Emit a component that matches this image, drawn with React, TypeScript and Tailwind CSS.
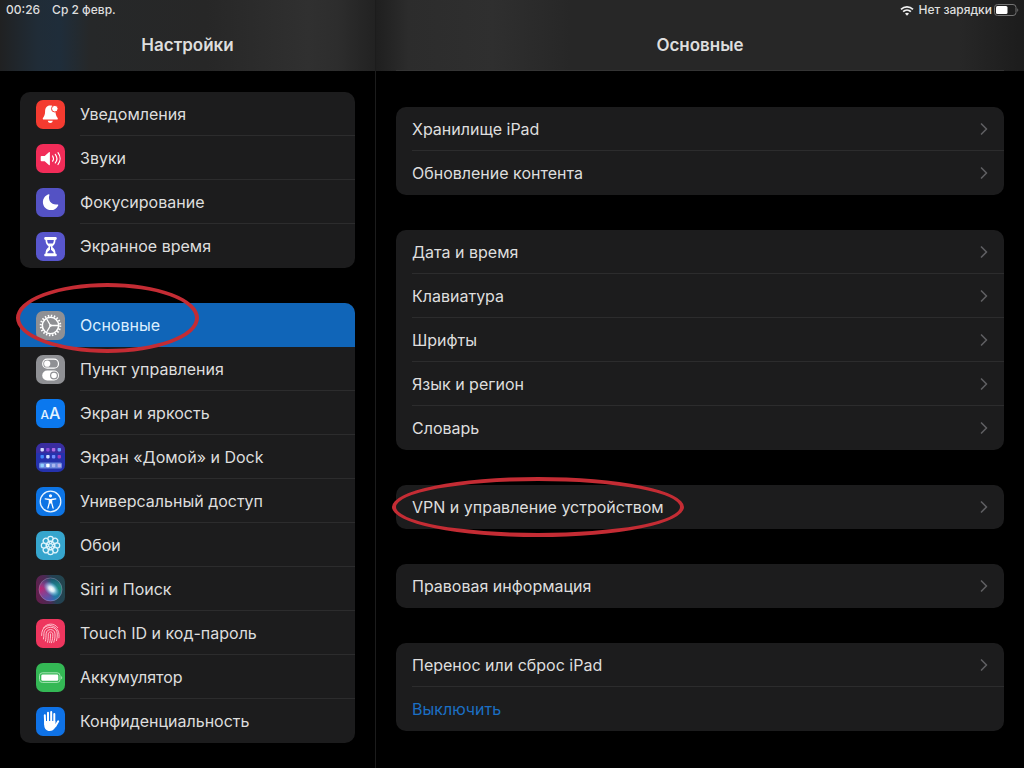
import React from "react";
import { ChevronRight } from "lucide-react";

type Item = {
  label: string;
  icon?: React.ReactNode;
  selected?: boolean;
  accent?: boolean;
  mark?: React.ReactNode;
};

const Tile = ({
  className,
  children,
}: {
  className: string;
  children: React.ReactNode;
}) => (
  <span
    className={`flex h-[29px] w-[29px] shrink-0 items-center justify-center overflow-hidden rounded-[7px] ${className}`}
  >
    {children}
  </span>
);

const Glyph = ({ children }: { children: React.ReactNode }) => (
  <svg viewBox="0 0 29 29" className="h-full w-full" fill="none" aria-hidden="true">
    {children}
  </svg>
);

const BellIcon = () => (
  <Tile className="bg-[#f43b30]">
    <Glyph>
      <path
        d="M14.2 5.500c-3.600 0-5 2.700-5.100 5.700-.1 3.300-.7 4.800-2 6.500-.7.9-.4 1.900.7 1.900h13c1.100 0 1.400-1 .7-1.900-1.300-1.700-1.900-3.200-2-6.500-.1-3-1.700-5.700-5.300-5.700z"
        fill="#fff"
      />
      <path d="M11.800 20.800h5c-.3 1.500-1.200 2.200-2.500 2.200s-2.200-.7-2.500-2.200z" fill="#fff" />
      <circle cx="18.800" cy="8.700" r="3.300" fill="#fff" stroke="#f43b30" strokeWidth="1" />
    </Glyph>
  </Tile>
);

const SoundIcon = () => (
  <Tile className="bg-[#f12c58]">
    <Glyph>
      <path d="M5.500 12h3.200l4.200-3.800c.5-.4 1-.2 1 .4v12c0 .6-.5.8-1 .4l-4.200-3.800H5.500c-.5 0-.8-.3-.8-.8v-3.600c0-.5.3-.8.8-.8z" fill="#fff" />
      <path d="M16.600 12c1 1.500 1 3.700 0 5.200M19.300 10.300c1.900 2.500 1.900 6.100 0 8.600M22 8.700c2.700 3.500 2.700 8.300 0 11.800" stroke="#fff" strokeWidth="1.200" strokeLinecap="round" />
    </Glyph>
  </Tile>
);

const MoonIcon = () => (
  <Tile className="bg-[#5452c4]">
    <Glyph>
      <path d="M12.700 6.300c.5-.2.900.2.700.7-1.700 5.500 2.100 10.300 8 9.400.7-.1 1.100.4.800 1-1.400 3-4.100 4.700-7.300 4.700-4.500 0-8-3.400-8-7.800 0-3.700 2.300-6.800 5.800-8z" fill="#fff" />
    </Glyph>
  </Tile>
);

const HourglassIcon = () => (
  <Tile className="bg-[#5856cd]">
    <Glyph>
      <path
        d="M9.500 5h10c.8 0 1.300.6 1.300 1.400 0 .9-.5 1.400-1.300 1.500 0 3.200-1.200 4.700-2.700 6-.5.4-.5 1.100 0 1.500 1.500 1.300 2.700 2.800 2.700 6 .8.1 1.300.6 1.300 1.500 0 .8-.5 1.400-1.300 1.400h-10c-.8 0-1.300-.6-1.300-1.400 0-.9.5-1.400 1.300-1.500 0-3.200 1.200-4.700 2.700-6 .5-.4.5-1.100 0-1.500-1.500-1.300-2.700-2.800-2.700-6-.8-.1-1.300-.6-1.300-1.500C8.200 5.600 8.700 5 9.500 5z"
        fill="#fff"
      />
      <path d="M11.200 8h6.600c0 1.600-.4 2.600-1 3.400h-4.600c-.6-.8-1-1.800-1-3.400zM14 14.600h1v3.200l2.400 2.200c.2.400.3.800.3 1.300h-6.400c0-.5.1-.9.300-1.300l2.400-2.200z" fill="#5856cd" />
    </Glyph>
  </Tile>
);

const GearIcon = () => (
  <Tile className="bg-[#8f9094]">
    <Glyph>
      <circle cx="14.500" cy="14.500" r="9.800" stroke="#fff" strokeWidth="2" strokeDasharray="1.500 1.579" />
      <circle cx="14.500" cy="14.500" r="8.200" stroke="#fff" strokeWidth="1.600" />
      <circle cx="14.500" cy="14.500" r="1.300" fill="#fff" />
      <path d="M14.500 14.500H22M14.500 14.500l-3.800-6.500M14.500 14.500l-3.800 6.500" stroke="#fff" strokeWidth="1.300" />
    </Glyph>
  </Tile>
);

const TogglesIcon = () => (
  <Tile className="bg-[#8f9094]">
    <Glyph>
      <rect x="6.700" y="4.200" width="15.800" height="9" rx="4.500" stroke="#fff" strokeWidth="1.200" />
      <circle cx="11.200" cy="8.700" r="3.100" fill="#fff" />
      <rect x="6.200" y="15.500" width="16.800" height="10" rx="5" fill="#fff" />
      <circle cx="18" cy="20.500" r="3.400" fill="#fff" stroke="#8f9094" strokeWidth="1.200" />
    </Glyph>
  </Tile>
);

const TextSizeIcon = () => (
  <Tile className="bg-[#0b78ee]">
    <span className="flex items-baseline font-medium leading-none text-[#e4f2ff]">
      <span className="text-[12px]">A</span>
      <span className="text-[16px]">A</span>
    </span>
  </Tile>
);

const homeApps = [
  ["#d5dcff", "#8a4bd8", "#b06be0", "#6da4ff"],
  ["#3f8cff", "#cfe0ff", "#6f8cff", "#a13ec0"],
];

const HomeScreenIcon = () => (
  <Tile className="bg-[#2532ad]">
    <Glyph>
      <rect x="0" y="0" width="29" height="10" fill="#3a2da0" />
      {homeApps.map((row, y) =>
        row.map((color, x) => (
          <rect key={`${x}-${y}`} x={4.5 + x * 5.7} y={5 + y * 7} width="3.400" height="3.400" rx="0.800" fill={color} />
        ))
      )}
      <rect x="3" y="19.500" width="23" height="6" rx="1.500" fill="#6b87dc" />
      {["#8fd0ff", "#ffffff", "#a9b6ee", "#b7a9e6"].map((color, x) => (
        <rect key={x} x={4.5 + x * 5.7} y="20.800" width="3.400" height="3.400" rx="0.800" fill={color} />
      ))}
    </Glyph>
  </Tile>
);

const AccessibilityIcon = () => (
  <Tile className="bg-[#0d74e4]">
    <Glyph>
      <circle cx="14.500" cy="14.500" r="10.300" stroke="#e4f2ff" strokeWidth="1.300" />
      <circle cx="14.500" cy="8.800" r="1.600" fill="#fff" />
      <path
        d="M9.200 11.800l4.200.7v3.200l-1.500 5.500M19.800 11.800l-4.200.7v3.200l1.500 5.500"
        stroke="#fff"
        strokeWidth="1.300"
        strokeLinecap="round"
        strokeLinejoin="round"
      />
      <path d="M13 12h3v4.400h-3z" fill="#fff" />
    </Glyph>
  </Tile>
);

const WallpaperIcon = () => (
  <Tile className="bg-[#36a5cd]">
    <Glyph>
      {[0, 45, 90, 135, 180, 225, 270, 315].map((angle) => (
        <g key={angle} transform={`rotate(${angle} 14.500 14.500)`}>
          <circle cx="14.500" cy="8" r="2.700" fill="#36a5cd" fillOpacity="0.500" stroke="#dff4fc" strokeWidth="1.200" />
          <circle cx="14.500" cy="11.300" r="1.500" stroke="#dff4fc" strokeWidth="0.900" />
        </g>
      ))}
      <circle cx="14.500" cy="14.500" r="1.900" fill="#36a5cd" stroke="#dff4fc" strokeWidth="1.100" />
    </Glyph>
  </Tile>
);

const SiriIcon = () => (
  <Tile className="bg-[#27203a]">
    <Glyph>
      <defs>
        <linearGradient id="siri-orb" x1="0" y1="0.600" x2="1" y2="0.400">
          <stop offset="0" stopColor="#d01c6c" />
          <stop offset="0.400" stopColor="#8b3c86" />
          <stop offset="0.620" stopColor="#1d7f86" />
          <stop offset="1" stopColor="#1a8a72" />
        </linearGradient>
        <linearGradient id="siri-shade" x1="0" y1="0" x2="0" y2="1">
          <stop offset="0" stopColor="#10324a" stopOpacity="0.700" />
          <stop offset="0.450" stopColor="#3478c8" stopOpacity="0" />
          <stop offset="1" stopColor="#2868cc" stopOpacity="0.700" />
        </linearGradient>
        <radialGradient id="siri-glow">
          <stop offset="0" stopColor="#fff" />
          <stop offset="0.350" stopColor="#e4f5ff" stopOpacity="0.900" />
          <stop offset="1" stopColor="#6cc8ff" stopOpacity="0" />
        </radialGradient>
      </defs>
      <rect width="29" height="29" fill="url(#siri-orb)" fillOpacity="0.350" />
      <circle cx="14.500" cy="14.500" r="11.500" fill="url(#siri-orb)" />
      <circle cx="14.500" cy="14.500" r="11.500" fill="url(#siri-shade)" stroke="#a58fb5" strokeOpacity="0.600" strokeWidth="0.800" />
      <ellipse cx="15.500" cy="14" rx="9" ry="6" transform="rotate(40 15.500 14)" fill="url(#siri-glow)" />
    </Glyph>
  </Tile>
);

const TouchIdIcon = () => (
  <Tile className="bg-[#ee365e]">
    <Glyph>
      <g stroke="#ffd0d8" strokeWidth="0.900" strokeLinecap="round">
        <path d="M7.500 8.800c3.800-5 10.700-5 14.200-.2" />
        <path d="M5.600 16.500c-.3-9.500 7.400-11.300 11.700-9.200 5 2.500 6.200 6.400 5.600 11.500" />
        <path d="M7.500 20c.5-2 .3-3.500.4-5.500.3-8.200 13.200-8.500 13.400.5.1 2.400-.2 4.200-.8 6.600" />
        <path d="M9.400 22c.7-2.500.6-4.800.7-7.200.3-5.600 8.600-5.700 8.900.1.200 3-.3 5.500-1.200 8.300" />
        <path d="M11.500 23.300c.8-2.900.8-5.300.8-8.200.1-2.900 4.300-2.900 4.500 0 .2 3-.4 6-1.400 8.700" />
        <path d="M14.500 15c.1 3-.1 5.800-.8 8.500" />
      </g>
    </Glyph>
  </Tile>
);

const BatteryIcon = () => (
  <Tile className="bg-[#34b855]">
    <Glyph>
      <rect x="3.500" y="9.800" width="20.500" height="9.600" rx="2.800" stroke="#a5e3b3" strokeWidth="1" />
      <rect x="5.300" y="11.500" width="17" height="6.200" rx="1.300" fill="#fff" />
      <path d="M25.300 12.900c1.200.4 1.200 3 0 3.400z" fill="#c9f1d2" />
    </Glyph>
  </Tile>
);

const HandIcon = () => (
  <Tile className="bg-[#0f72e6]">
    <Glyph>
      <g stroke="#fff" strokeWidth="2" strokeLinecap="round">
        <path d="M8.800 8.300l.4 9M12 5.700v10M15.200 5.100v10M18.300 7v10" />
        <path d="M22.200 14.300l-2.900 5" />
      </g>
      <path d="M8.200 14h11.100v3l1.300-.3c-.6 2.300-1.300 3.900-2.500 5.300-1 1.300-2.300 2-4.300 2-3.700 0-5.400-2.400-5.600-6z" fill="#fff" />
    </Glyph>
  </Tile>
);

const Mark = ({ className }: { className: string }) => (
  <span
    className={`pointer-events-none absolute z-10 rounded-[50%] border-4 border-[#c42c34] ${className}`}
  />
);

const sidebarGroups: Item[][] = [
  [
    { label: "Уведомления", icon: <BellIcon /> },
    { label: "Звуки", icon: <SoundIcon /> },
    { label: "Фокусирование", icon: <MoonIcon /> },
    { label: "Экранное время", icon: <HourglassIcon /> },
  ],
  [
    {
      label: "Основные",
      icon: <GearIcon />,
      selected: true,
      mark: <Mark className="-left-1 -top-5 h-[70px] w-[183px]" />,
    },
    { label: "Пункт управления", icon: <TogglesIcon /> },
    { label: "Экран и яркость", icon: <TextSizeIcon /> },
    { label: "Экран «Домой» и Dock", icon: <HomeScreenIcon /> },
    { label: "Универсальный доступ", icon: <AccessibilityIcon /> },
    { label: "Обои", icon: <WallpaperIcon /> },
    { label: "Siri и Поиск", icon: <SiriIcon /> },
    { label: "Touch ID и код-пароль", icon: <TouchIdIcon /> },
    { label: "Аккумулятор", icon: <BatteryIcon /> },
    { label: "Конфиденциальность", icon: <HandIcon /> },
  ],
];

const generalGroups: Item[][] = [
  [{ label: "Хранилище iPad" }, { label: "Обновление контента" }],
  [
    { label: "Дата и время" },
    { label: "Клавиатура" },
    { label: "Шрифты" },
    { label: "Язык и регион" },
    { label: "Словарь" },
  ],
  [
    {
      label: "VPN и управление устройством",
      mark: <Mark className="-left-1 -top-2 h-[60px] w-[292px]" />,
    },
  ],
  [{ label: "Правовая информация" }],
  [{ label: "Перенос или сброс iPad" }, { label: "Выключить", accent: true }],
];

const SidebarRow = ({ item }: { item: Item }) => (
  <li className="group relative">
    <a
      href="#"
      aria-current={item.selected ? "page" : undefined}
      className={`flex h-11 items-center gap-[15px] pl-4 group-first:rounded-t-[10px] group-last:rounded-b-[10px] ${
        item.selected ? "bg-[#1065b8] text-[#dcefff]" : "text-[#dedede]"
      }`}
    >
      {item.icon}
      <span
        className={`flex h-full flex-1 items-center group-last:border-b-0 ${
          item.selected ? "" : "border-b border-[#2c2c2d]"
        }`}
      >
        {item.label}
      </span>
    </a>
    {item.mark}
  </li>
);

const GeneralRow = ({ item }: { item: Item }) => (
  <li className="group relative pl-4">
    {item.accent ? (
      <button type="button" className="flex h-11 w-full items-center text-[#1b6fc4]">
        {item.label}
      </button>
    ) : (
      <a
        href="#"
        className="flex h-11 items-center justify-between border-b border-[#2c2c2d] pr-[10px] text-[#dedede] group-last:border-b-0"
      >
        {item.label}
        <ChevronRight className="h-5 w-5 text-[#5e5e61]" strokeWidth={2} />
      </a>
    )}
    {item.mark}
  </li>
);

const App = () => {
  return (
    <div className="flex min-h-screen bg-black font-['Inter','Liberation_Sans',sans-serif] text-[16px] leading-[22px] text-[#dedede]">
      <aside className="w-[376px] shrink-0 border-r border-[#1c1c1c]">
        <header className="h-[71px] bg-[linear-gradient(90deg,#202122_0%,#202c37_10%,#1f2d3a_16%,#262829_24%,#272727_55%,#303030_82%,#2d2d2d_90%,#222222_100%)]">
          <div className="flex h-5 items-center gap-3 pl-[6px] text-[12px] font-medium leading-5">
            <span>00:26</span>
            <span>Ср 2 февр.</span>
          </div>
          <h1 className="pt-[14px] text-center text-[17px] font-semibold">Настройки</h1>
        </header>
        <nav className="flex flex-col gap-[35px] px-5 pb-6 pt-[21px]" aria-label="Настройки">
          {sidebarGroups.map((group, index) => (
            <ul key={index} className="rounded-[10px] bg-[#1c1c1d]">
              {group.map((item) => (
                <SidebarRow key={item.label} item={item} />
              ))}
            </ul>
          ))}
        </nav>
      </aside>

      <main className="min-w-0 flex-1">
        <header className="flex h-[71px] flex-col bg-[linear-gradient(90deg,#1f1f1f_0%,#2c2c2c_5%,#2f2f2f_18%,#272727_30%,#272727_90%,#1c1c1c_100%)]">
          <div className="flex h-5 items-center justify-end pr-[5px] text-[12px] font-medium leading-5">
            <svg viewBox="0 0 14 11" className="mr-1 h-[11px] w-[14px]" fill="none" aria-hidden="true">
              <path d="M1 4.300c3.400-3.200 8.600-3.200 12 0M3.100 6.600c2.200-2 5.600-2 7.800 0" stroke="#f0f0f0" strokeWidth="1.700" />
              <path d="M5 8.500c1.200-1.100 2.800-1.100 4 0l-2 2.200z" fill="#f0f0f0" />
            </svg>
            <span>Нет зарядки</span>
            <svg viewBox="0 0 25 12" className="ml-[2px] h-3 w-[25px]" fill="none" aria-hidden="true">
              <rect x="0.500" y="0.500" width="21.500" height="11" rx="3" stroke="#747474" />
              <rect x="2" y="2" width="11.500" height="8" rx="1.500" fill="#fff" />
              <path d="M23.300 4.200c1.300.5 1.300 3.100 0 3.600z" fill="#747474" />
            </svg>
          </div>
          <h2 className="pt-[14px] text-center text-[17px] font-semibold">Основные</h2>
          <div className="mx-5 mt-auto h-px bg-[#343434]" />
        </header>
        <div className="flex flex-col gap-[35px] px-5 pb-9 pt-9">
          {generalGroups.map((group, index) => (
            <ul key={index} className="rounded-[10px] bg-[#1c1c1d]">
              {group.map((item) => (
                <GeneralRow key={item.label} item={item} />
              ))}
            </ul>
          ))}
        </div>
      </main>
    </div>
  );
};

export default App;
